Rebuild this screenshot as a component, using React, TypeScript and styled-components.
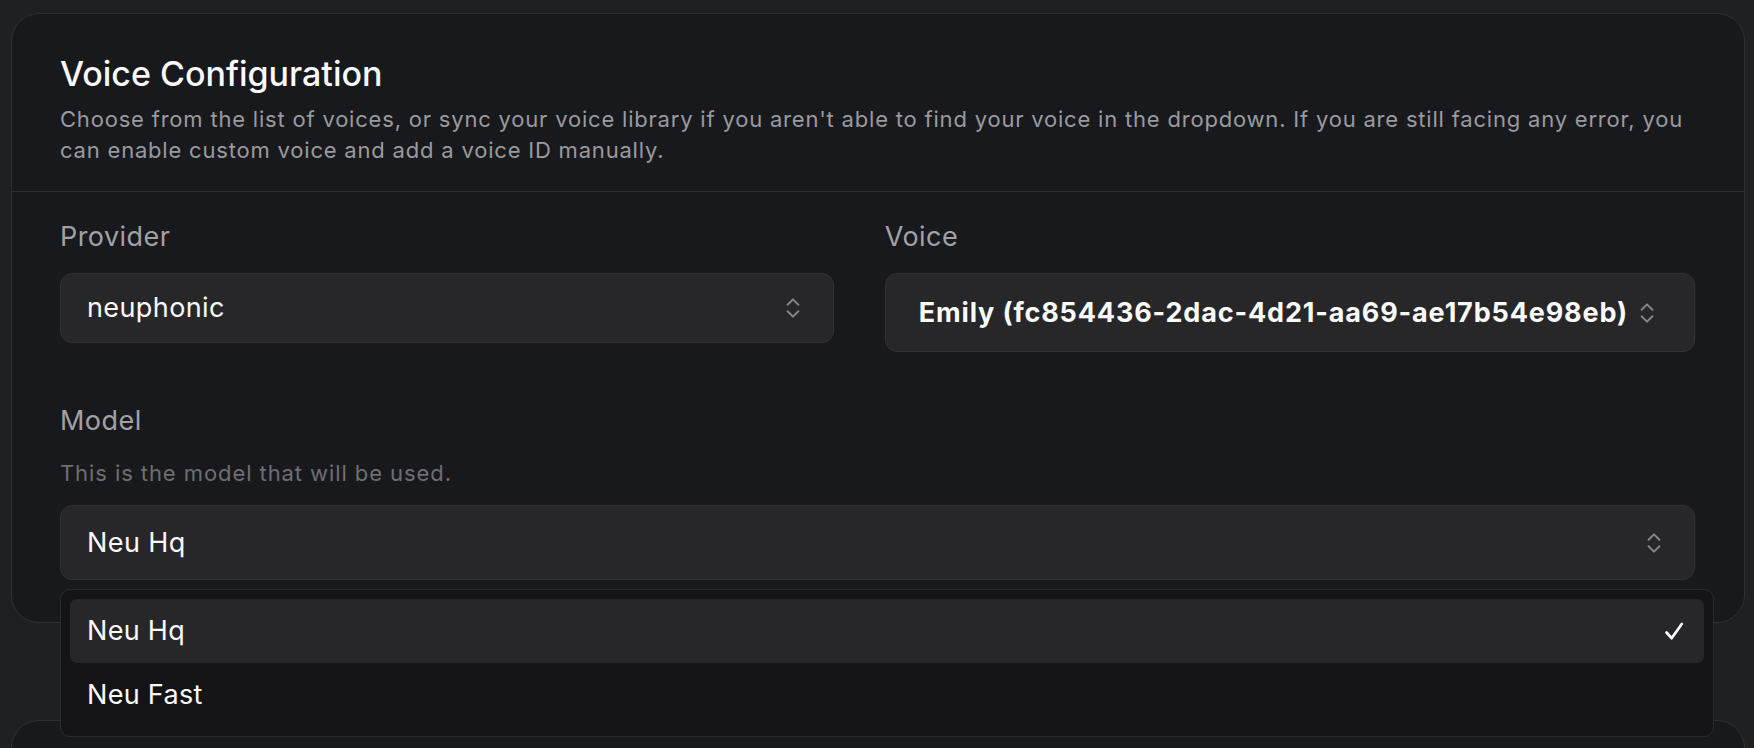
import React from "react";
import styled, { createGlobalStyle } from "styled-components";
import { ChevronsUpDown } from "lucide-react";

const GlobalStyle = createGlobalStyle`
  html, body {
    margin: 0;
    padding: 0;
    background: #1f2023;
    font-family: Inter, "Noto Sans", "Liberation Sans", sans-serif;
    -webkit-font-smoothing: antialiased;
  }
  * { box-sizing: border-box; }
`;

const Page = styled.div`
  height: 748px;
  overflow: hidden;
  padding: 13px 9px 0 11px;
  display: flex;
  flex-direction: column;
  gap: 97px;
`;

const Card = styled.section`
  position: relative;
  background: #18191c;
  border: 1px solid #2f3034;
  border-radius: 28px;
  flex-shrink: 0;
`;

const CardHeader = styled.header`
  padding: 40px 49px 25px 48px;
  border-bottom: 1px solid #2f3034;
`;

const Title = styled.h2`
  margin: 0;
  font-size: 34px;
  line-height: 40px;
  font-weight: 500;
  color: #fafafa;
  letter-spacing: 0;
`;

const Description = styled.p<{ $muted?: boolean }>`
  margin: 0;
  font-size: 22px;
  line-height: 31px;
  font-weight: 400;
  letter-spacing: ${(p) => (p.$muted ? "0.92px" : "0.8px")};
  color: ${(p) => (p.$muted ? "#6e6e73" : "#9a9a9f")};
`;

const HeaderDescription = styled(Description)`
  margin-top: 10px;
`;

const CardBody = styled.div`
  padding: 29px 49px 42px 48px;
  display: flex;
  flex-direction: column;
  gap: 53px;
`;

const Row = styled.div`
  display: grid;
  grid-template-columns: minmax(0, 1fr) auto;
  column-gap: 51px;
  align-items: start;
`;

const Field = styled.div`
  display: flex;
  flex-direction: column;
  position: relative;
`;

const Label = styled.label`
  font-size: 27px;
  line-height: 32px;
  font-weight: 400;
  letter-spacing: 0.45px;
  color: #a1a1a6;
  margin-bottom: 20px;
`;

const FieldDescription = styled(Description)`
  margin-top: 1px;
  margin-bottom: 16px;
`;

const TriggerWrap = styled.div`
  position: relative;
`;

const Trigger = styled.button<{ $height: number; $strong?: boolean }>`
  display: flex;
  align-items: center;
  justify-content: space-between;
  gap: 6px;
  width: 100%;
  height: ${(p) => p.$height}px;
  padding: ${(p) => (p.$strong ? "0 34px 0 33px" : "0 27px 0 26px")};
  background: #27272a;
  border: 1px solid #323236;
  border-radius: 12px;
  color: #fafafa;
  font-family: inherit;
  font-size: 27px;
  line-height: 32px;
  font-weight: ${(p) => (p.$strong ? 700 : 400)};
  letter-spacing: ${(p) => (p.$strong ? "0.85px" : "0.4px")};
  text-align: left;
  white-space: nowrap;
  cursor: pointer;
`;

const Chevron = styled(ChevronsUpDown)`
  flex-shrink: 0;
  color: #85858a;
`;

const Menu = styled.div`
  position: absolute;
  top: calc(100% + 9px);
  left: 0;
  width: calc(100% + 19px);
  z-index: 10;
  padding: 9px;
  background: #141417;
  border: 1px solid #2c2c30;
  border-radius: 10px;
  display: flex;
  flex-direction: column;
`;

const Item = styled.div<{ $active?: boolean }>`
  display: flex;
  align-items: center;
  justify-content: space-between;
  height: 64px;
  padding: 0 20px 0 17px;
  border-radius: 7px;
  background: ${(p) => (p.$active ? "#27272a" : "transparent")};
  color: #fafafa;
  font-size: 27px;
  line-height: 32px;
  letter-spacing: 0.3px;
`;

const SecondCard = styled(Card)`
  height: 200px;
`;

const CheckMark = () => (
  <svg width="20" height="19" viewBox="0 0 20 19" fill="none">
    <path
      d="M2.5 10.5 L7.6 16.2 L17.8 2"
      stroke="#ffffff"
      strokeWidth="2.7"
      strokeLinecap="round"
      strokeLinejoin="round"
    />
  </svg>
);

export default function App() {
  return (
    <>
      <GlobalStyle />
      <Page>
        <Card>
          <CardHeader>
            <Title>Voice Configuration</Title>
            <HeaderDescription>
              Choose from the list of voices, or sync your voice library if you aren't able to find your voice in the
              dropdown. If you are still facing any error, you can enable custom voice and add a voice ID manually.
            </HeaderDescription>
          </CardHeader>
          <CardBody>
            <Row>
              <Field>
                <Label>Provider</Label>
                <Trigger $height={70}>
                  <span>neuphonic</span>
                  <Chevron size={26} strokeWidth={1.8} />
                </Trigger>
              </Field>
              <Field>
                <Label>Voice</Label>
                <Trigger $height={79} $strong>
                  <span>Emily (fc854436-2dac-4d21-aa69-ae17b54e98eb)</span>
                  <Chevron size={26} strokeWidth={1.8} />
                </Trigger>
              </Field>
            </Row>
            <Field>
              <Label>Model</Label>
              <FieldDescription $muted>This is the model that will be used.</FieldDescription>
              <TriggerWrap>
                <Trigger $height={75}>
                  <span>Neu Hq</span>
                  <Chevron size={26} strokeWidth={1.8} />
                </Trigger>
                <Menu>
                  <Item $active>
                    <span>Neu Hq</span>
                    <CheckMark />
                  </Item>
                  <Item>
                    <span>Neu Fast</span>
                  </Item>
                </Menu>
              </TriggerWrap>
            </Field>
          </CardBody>
        </Card>
        <SecondCard />
      </Page>
    </>
  );
}
